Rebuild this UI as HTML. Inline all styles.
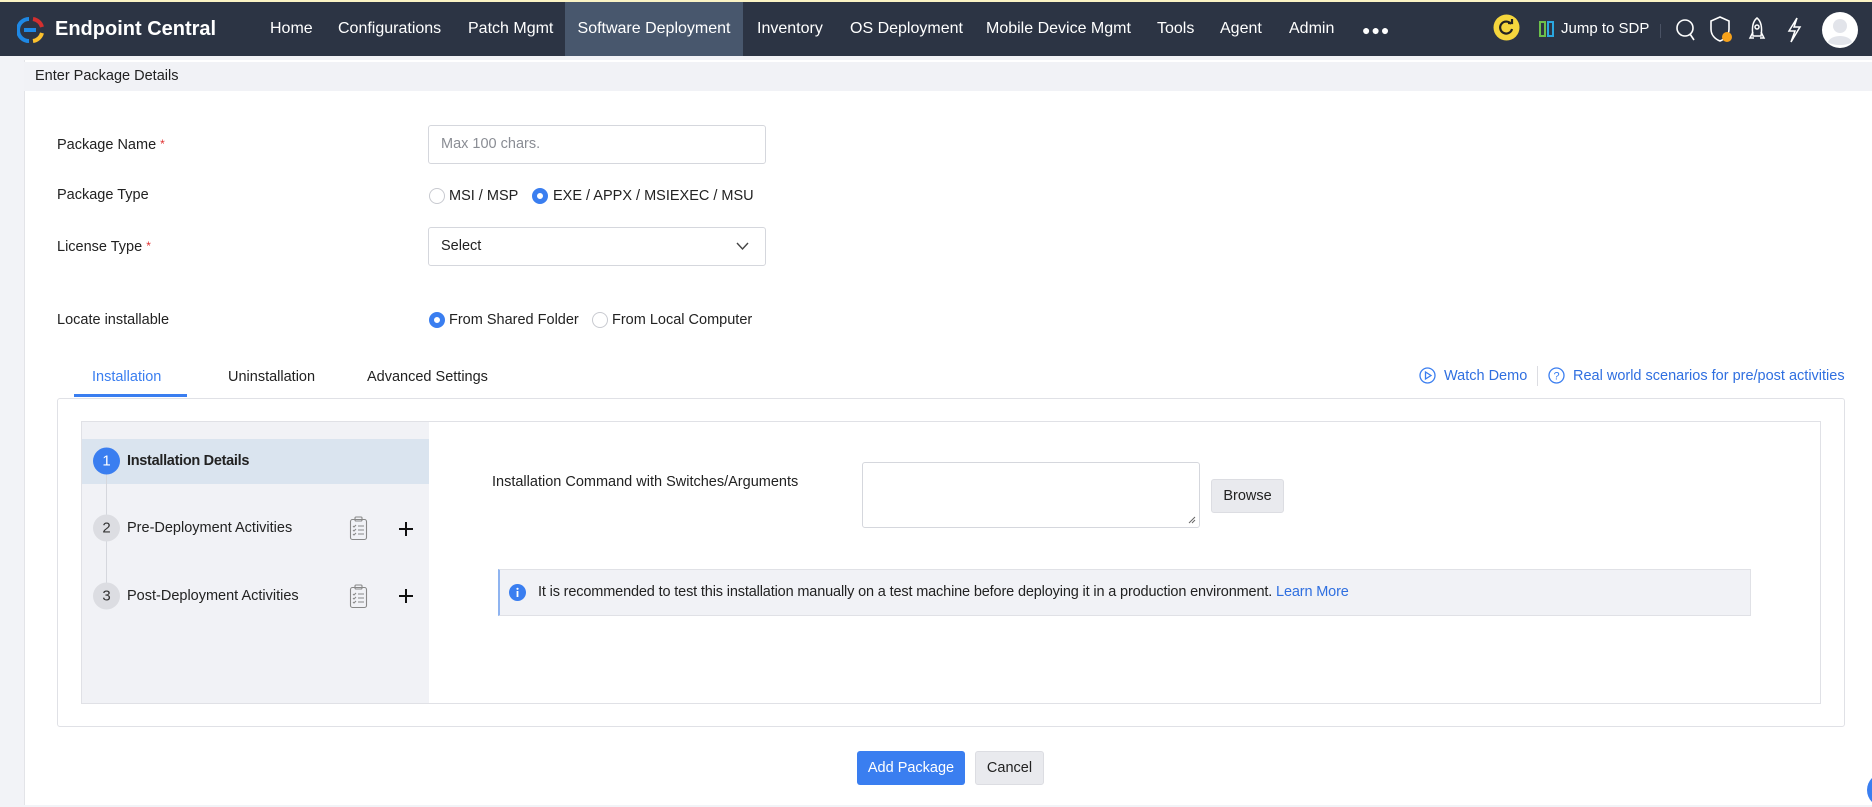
<!DOCTYPE html>
<html><head><meta charset="utf-8"><style>
*{box-sizing:border-box;margin:0;padding:0}
body{width:1872px;height:805px;overflow:hidden;background:#f2f3f7;font-family:"Liberation Sans",sans-serif;color:#222;position:relative;font-size:14.5px}
.abs{position:absolute}
.nav{left:0;top:0;width:1872px;height:56px;background:#2c3444;border-top:2px solid #fbf3c4}
.nav .it{position:absolute;top:0;height:54px;line-height:54px;color:#fff;font-size:16px;white-space:nowrap}
.panel{left:24px;top:60px;width:1848px;height:745px;background:#fff;border-left:1px solid #e3e4e8}
.hdr{left:24px;top:62px;width:1848px;height:29px;background:#f1f2f6;line-height:29px;padding-left:11px;font-size:14.5px;color:#222}
.lbl{position:absolute;left:57px;font-size:14.5px;color:#222;transform:translateY(-50%)}
.req{color:#e03030;font-size:12px;vertical-align:top}
.inp{position:absolute;left:428px;width:338px;height:39px;border:1px solid #d5d7dd;border-radius:3px;background:#fff;padding-left:12px;line-height:37px;font-size:14.5px}
.radio{position:absolute;width:16px;height:16px;border-radius:50%;border:1px solid #c8cad0;background:#fff;transform:translateY(-50%)}
.radio.on{border:5px solid #3a7ef0;background:#fff}
.rt{position:absolute;transform:translateY(-50%);font-size:14.5px;white-space:nowrap}
.step{position:absolute;left:93px;width:27px;height:27px;border-radius:50%;background:#dcdde2;text-align:center;line-height:27px;font-size:15px;color:#333;transform:translateY(-50%)}
.stext{position:absolute;left:127px;font-size:14.5px;transform:translateY(-50%);white-space:nowrap}
.btn{position:absolute;border-radius:3px;text-align:center;font-size:14.5px}
</style></head><body>
<div class="abs nav">
 <svg class="abs" style="left:17px;top:14px" width="28" height="28" viewBox="0 0 28 28">
  <path d="M12 3 A11 11 0 0 0 12 25" stroke="#1e88e5" stroke-width="4" fill="none"/>
  <path d="M16 3 A11 11 0 0 1 25 11" stroke="#d32f2f" stroke-width="4" fill="none"/>
  <path d="M25 17 A11 11 0 0 1 16 25" stroke="#fbc02d" stroke-width="4" fill="none"/>
  <rect x="7" y="12" width="12" height="4" fill="#1e88e5"/>
 </svg>
 <div class="it" style="left:55px;font-weight:bold;font-size:20px">Endpoint Central</div>
 <div class="it" style="left:270px">Home</div>
 <div class="it" style="left:338px">Configurations</div>
 <div class="it" style="left:468px">Patch Mgmt</div>
 <div class="it" style="left:565px;width:178px;background:#48576d;text-align:center">Software Deployment</div>
 <div class="it" style="left:757px">Inventory</div>
 <div class="it" style="left:850px">OS Deployment</div>
 <div class="it" style="left:986px">Mobile Device Mgmt</div>
 <div class="it" style="left:1157px">Tools</div>
 <div class="it" style="left:1220px">Agent</div>
 <div class="it" style="left:1289px">Admin</div>
 <div class="it" style="left:1362px;font-size:14px;letter-spacing:1px;top:1px">●●●</div>
 <svg class="abs" style="left:1493px;top:12px" width="27" height="27" viewBox="0 0 27 27"><circle cx="13.5" cy="13.5" r="13" fill="#f5d63d"/><path d="M18 10 A6 6 0 1 0 19 15" stroke="#222" stroke-width="2.2" fill="none"/><path d="M15 9 L19 9 L19 5" stroke="#222" stroke-width="2.2" fill="none"/></svg>
 <svg class="abs" style="left:1538px;top:18px" width="17" height="18" viewBox="0 0 17 18"><path d="M2 2h5v14h-5z" stroke="#6cc04a" stroke-width="2" fill="none"/><path d="M10 2h5v14h-5z" stroke="#2aa7e0" stroke-width="2" fill="none"/></svg>
 <div class="it" style="left:1561px;font-size:15px">Jump to SDP</div>
 <div class="abs" style="left:1660px;top:22px;width:1px;height:14px;background:#4a5264"></div>
 <svg class="abs" style="left:1675px;top:16px" width="22" height="24" viewBox="0 0 22 24" fill="none" stroke="#fff" stroke-width="1.6"><circle cx="10" cy="10" r="8"/><path d="M15 16l4 6"/></svg>
 <svg class="abs" style="left:1709px;top:13px" width="26" height="30" viewBox="0 0 26 30" fill="none" stroke="#fff" stroke-width="1.6"><path d="M11 2 L20 6 V14 C20 20 16 24 11 26 C6 24 2 20 2 14 V6 Z"/><circle cx="18" cy="22" r="5" fill="#f7a21b" stroke="none"/></svg>
 <svg class="abs" style="left:1748px;top:14px" width="18" height="28" viewBox="0 0 18 28" fill="none" stroke="#fff" stroke-width="1.5"><path d="M9 2 C14 6 14 14 13 20 H5 C4 14 4 6 9 2Z"/><circle cx="9" cy="11" r="2"/><path d="M5 16 L2 22 H6 M13 16 L16 22 H12"/></svg>
 <svg class="abs" style="left:1786px;top:14px" width="16" height="28" viewBox="0 0 16 28" fill="none" stroke="#fff" stroke-width="1.5"><path d="M11 2 L3 15 H9 L5 26 L14 11 H8 Z"/></svg>
 <svg class="abs" style="left:1822px;top:10px" width="36" height="36" viewBox="0 0 36 36"><circle cx="18" cy="18" r="18" fill="#fff"/><circle cx="18" cy="14" r="7" fill="#e2e4ea"/><path d="M6 30 C9 22 27 22 30 30 C26 34 10 34 6 30Z" fill="#e2e4ea"/></svg>
</div>
<div class="abs panel"></div>
<div class="abs hdr">Enter Package Details</div>

<div class="lbl" style="top:145px">Package Name <span class="req">*</span></div>
<div class="inp" style="top:125px;color:#8a8d94">Max 100 chars.</div>
<div class="lbl" style="top:195px">Package Type</div>
<div class="radio" style="left:429px;top:196px"></div><div class="rt" style="left:449px;top:196px">MSI / MSP</div>
<div class="radio on" style="left:532px;top:196px"></div><div class="rt" style="left:553px;top:196px">EXE / APPX / MSIEXEC / MSU</div>
<div class="lbl" style="top:247px">License Type <span class="req">*</span></div>
<div class="inp" style="top:227px">Select<svg class="abs" style="left:307px;top:14px" width="13" height="9" viewBox="0 0 13 9" fill="none" stroke="#444" stroke-width="1.4"><path d="M1 1l5.5 6 5.5-6"/></svg></div>
<div class="lbl" style="top:320px">Locate installable</div>
<div class="radio on" style="left:429px;top:320px"></div><div class="rt" style="left:449px;top:320px">From Shared Folder</div>
<div class="radio" style="left:592px;top:320px"></div><div class="rt" style="left:612px;top:320px">From Local Computer</div>

<div class="rt" style="left:92px;top:377px;color:#3a7ef0">Installation</div>
<div class="abs" style="left:74px;top:394px;width:113px;height:3px;background:#3a7ef0"></div>
<div class="rt" style="left:228px;top:377px">Uninstallation</div>
<div class="rt" style="left:367px;top:377px">Advanced Settings</div>
<svg class="abs" style="left:1419px;top:367px" width="17" height="17" viewBox="0 0 17 17" fill="none" stroke="#3a7ef0" stroke-width="1.3"><circle cx="8.5" cy="8.5" r="7.5"/><path d="M6.5 5v7l5.5-3.5z"/></svg>
<div class="rt" style="left:1444px;top:376px;color:#2f6fe0;font-size:14.5px">Watch Demo</div>
<div class="abs" style="left:1537px;top:366px;width:1px;height:20px;background:#dcdde2"></div>
<svg class="abs" style="left:1548px;top:367px" width="17" height="17" viewBox="0 0 17 17" fill="none" stroke="#3a7ef0" stroke-width="1.3"><circle cx="8.5" cy="8.5" r="7.5"/><text x="8.5" y="12.5" font-size="11" fill="#3a7ef0" stroke="none" text-anchor="middle" font-family="Liberation Sans">?</text></svg>
<div class="rt" style="left:1573px;top:376px;color:#2f6fe0;font-size:14.5px">Real world scenarios for pre/post activities</div>

<div class="abs" style="left:57px;top:398px;width:1788px;height:329px;border:1px solid #e0e1e6;border-radius:3px;background:#fff"></div>
<div class="abs" style="left:81px;top:421px;width:1740px;height:283px;border:1px solid #e0e1e6;background:#fff"></div>
<div class="abs" style="left:82px;top:422px;width:347px;height:281px;background:#f1f2f6"></div>
<div class="abs" style="left:82px;top:439px;width:347px;height:45px;background:#dae4ef"></div>
<div class="abs" style="left:106px;top:470px;width:1px;height:125px;background:#d5d7dd"></div>
<div class="step" style="top:461px;background:#3a7ef0;color:#fff">1</div>
<div class="stext" style="top:461px;font-weight:bold;letter-spacing:-0.3px">Installation Details</div>
<div class="step" style="top:528px">2</div>
<div class="stext" style="top:528px">Pre-Deployment Activities</div>
<div class="step" style="top:596px">3</div>
<div class="stext" style="top:596px">Post-Deployment Activities</div>
<svg class="abs" style="left:349px;top:516px" width="19" height="25" viewBox="0 0 19 25" fill="none" stroke="#888" stroke-width="1.1"><rect x="1.5" y="3.5" width="16" height="20" rx="2"/><rect x="6" y="1" width="7" height="4" rx="1"/><path d="M4 10l1 1 2-2M9 10h6M4 14l1 1 2-2M9 14h6M4 18l1 1 2-2M9 18h6"/></svg>
<svg class="abs" style="left:349px;top:584px" width="19" height="25" viewBox="0 0 19 25" fill="none" stroke="#888" stroke-width="1.1"><rect x="1.5" y="3.5" width="16" height="20" rx="2"/><rect x="6" y="1" width="7" height="4" rx="1"/><path d="M4 10l1 1 2-2M9 10h6M4 14l1 1 2-2M9 14h6M4 18l1 1 2-2M9 18h6"/></svg>
<svg class="abs" style="left:399px;top:522px" width="14" height="14" viewBox="0 0 14 14" stroke="#111" stroke-width="2"><path d="M7 0v14M0 7h14"/></svg>
<svg class="abs" style="left:399px;top:589px" width="14" height="14" viewBox="0 0 14 14" stroke="#111" stroke-width="2"><path d="M7 0v14M0 7h14"/></svg>

<div class="rt" style="left:492px;top:482px">Installation Command with Switches/Arguments</div>
<div class="abs" style="left:862px;top:462px;width:338px;height:66px;border:1px solid #d5d7dd;border-radius:3px;background:#fff"></div>
<svg class="abs" style="left:1188px;top:516px" width="8" height="8" viewBox="0 0 8 8" stroke="#666" stroke-width="1"><path d="M1 7L7 1M4 7L7 4"/></svg>
<div class="btn" style="left:1211px;top:479px;width:73px;height:34px;line-height:32px;background:#e9eaee;border:1px solid #dcdde2">Browse</div>
<div class="abs" style="left:498px;top:569px;width:1253px;height:47px;background:#f1f2f6;border:1px solid #e0e1e6;border-left:2px solid #8fb4f0"></div>
<svg class="abs" style="left:509px;top:584px" width="17" height="17" viewBox="0 0 17 17"><circle cx="8.5" cy="8.5" r="8.5" fill="#3a7ef0"/><rect x="7.6" y="7" width="1.8" height="6" fill="#fff"/><circle cx="8.5" cy="4.8" r="1.1" fill="#fff"/></svg>
<div class="rt" style="left:538px;top:592px;font-size:14.5px;letter-spacing:-0.15px">It is recommended to test this installation manually on a test machine before deploying it in a production environment. <span style="color:#2f6fe0">Learn More</span></div>

<div class="btn" style="left:857px;top:751px;width:108px;height:34px;line-height:34px;background:#3a7ef0;color:#fff">Add Package</div>
<div class="btn" style="left:975px;top:751px;width:69px;height:34px;line-height:32px;background:#e9eaee;border:1px solid #dcdde2">Cancel</div>
<div class="abs" style="left:1867px;top:773px;width:34px;height:34px;border-radius:50%;background:#3a7ef0"></div>
</body></html>
